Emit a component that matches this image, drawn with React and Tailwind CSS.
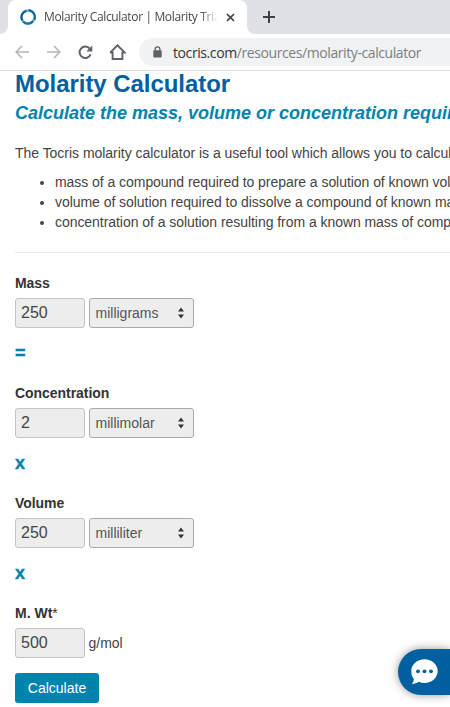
import React from 'react'

const fields = [
  { label: 'Mass', value: '250', unit: 'milligrams', operator: '=' },
  { label: 'Concentration', value: '2', unit: 'millimolar', operator: 'x' },
  { label: 'Volume', value: '250', unit: 'milliliter', operator: 'x' },
]

function Logo() {
  return (
    <svg className="w-4 h-4 shrink-0" viewBox="0 0 16 16" fill="none">
      <circle cx="8" cy="8" r="6.5" stroke="#7db6d8" strokeWidth="2.4" />
      <path d="M8.5 1.3A6.7 6.7 0 0 1 14.2 11" stroke="#0b62a0" strokeWidth="1.9" />
      <path d="M13.200 12A6.600 6.600 0 0 1 3 12.400" stroke="#1673ae" strokeWidth="2.300" />
      <path d="M2.3 11.5A6.7 6.7 0 0 1 6.5 1.8" stroke="#0b62a0" strokeWidth="2.2" />
    </svg>
  )
}

function TabStrip() {
  return (
    <div className="flex h-[34px] bg-white">
      <div className="w-2 bg-[#dee1e6] rounded-br-lg" />
      <div className="w-[239px] bg-[#dee1e6]">
        <div className="flex items-center h-full pl-3 pr-[12px] bg-white rounded-t-lg">
          <Logo />
          <span className="ml-2 w-[174px] overflow-hidden whitespace-nowrap text-[12px] tracking-[-0.36px] text-[#45494d] [mask-image:linear-gradient(to_right,black_90%,transparent)]">
            Molarity Calculator | Molarity Triangle
          </span>
          <svg className="ml-auto w-[9px] h-[9px] shrink-0" viewBox="0 0 9 9" stroke="#3c4043" strokeWidth="1.7">
            <path d="M1 1l7 7M8 1l-7 7" />
          </svg>
        </div>
      </div>
      <div className="flex-1 flex items-center pl-4 bg-[#dee1e6] rounded-bl-lg">
        <svg className="w-[12px] h-[12px]" viewBox="0 0 12 12" stroke="#3c4043" strokeWidth="2">
          <path d="M6 0v12M0 6h12" />
        </svg>
      </div>
    </div>
  )
}

function Toolbar() {
  return (
    <div className="flex items-center h-[37px] pl-[15px] bg-white border-b border-[#dcdddf]">
      <svg className="w-[14px] h-[14px] shrink-0" viewBox="0 0 14 14" fill="none" stroke="#b5b7b9" strokeWidth="1.6">
        <path d="M14 7H1.5M7 1L1.2 7L7 13" />
      </svg>
      <svg className="ml-[18px] w-[14px] h-[14px] shrink-0" viewBox="0 0 14 14" fill="none" stroke="#b5b7b9" strokeWidth="1.6">
        <path d="M0 7h12.5M7 1l5.8 6L7 13" />
      </svg>
      <svg className="ml-[17px] w-[15px] h-[15px] shrink-0" viewBox="0 0 15 15" fill="none">
        <path d="M12.6 9.4A5.7 5.7 0 1 1 11.7 3.7" stroke="#5f6368" strokeWidth="2" />
        <path d="M14.3 0.6v6H8.3z" fill="#5f6368" />
      </svg>
      <svg className="ml-[16px] w-[17px] h-[16px] shrink-0" viewBox="0 0 17 16" fill="none" stroke="#5f6368" strokeWidth="1.9">
        <path d="M3.6 7.5V15h9.8V7.5M1.2 8.6L8.5 1.3l7.3 7.3H13" />
        <path d="M1.2 8.6H4" />
      </svg>
      <div className="flex-1 flex items-center h-7 ml-[13px] pl-[14px] bg-[#f0f2f3] rounded-l-full">
        <svg className="w-[9px] h-[12px] shrink-0" viewBox="0 0 9 12">
          <path d="M2.1 5V3.2a2.4 2.4 0 0 1 4.8 0V5" fill="none" stroke="#5f6368" strokeWidth="1.3" />
          <rect x="0.3" y="4.2" width="8.4" height="7.3" rx="0.9" fill="#5f6368" />
        </svg>
        <span className="ml-[11px] whitespace-nowrap text-[14px] tracking-[-0.41px] text-[#7b7f83]">
          <span className="text-[#333639]">tocris.com</span>/resources/molarity-calculator
        </span>
      </div>
    </div>
  )
}

function NumberBox({ value }) {
  return (
    <input
      type="text"
      defaultValue={value}
      className="w-[70px] h-[30px] px-[5px] text-[16px] text-[#444] bg-[#ededed] border border-[#c4c4c4] rounded-[3px] outline-none"
    />
  )
}

function UnitSelect({ unit }) {
  return (
    <button className="flex items-center justify-between w-[105px] h-[30px] pl-[6px] pr-[9px] text-[14px] text-[#555] bg-[#ededed] border border-[#aaa] rounded-[3px]">
      {unit}
      <svg className="w-[6px] h-[12px]" viewBox="0 0 6 12" fill="#333">
        <path d="M3 0.5L6 4.5H0zM3 11.5L0 7.5h6z" />
      </svg>
    </button>
  )
}

function ChatButton() {
  return (
    <button className="absolute right-0 top-[649px] w-[52px] h-[46px] pl-[13px] pb-[2px] flex items-center bg-[#0260a1] rounded-l-full shadow-[0_0_10px_rgba(0,0,0,0.4)]">
      <svg className="w-[27px] h-[25px]" viewBox="0 0 27 25">
        <path
          d="M13.5 0.3C20.9 0.3 26.7 5.5 26.7 12S20.9 24 13.5 24c-2.1 0-4-.4-5.8-1.2C5.6 24.4 3.1 24.9.7 24.8c1.3-1.3 2-2.8 2.2-4.6C1.2 18 .3 15.2.3 12 .3 5.5 6.1.3 13.5.3z"
          fill="#fff"
        />
        <g fill="#0260a1">
          <circle cx="7" cy="12.3" r="1.9" />
          <circle cx="13.5" cy="12.3" r="1.9" />
          <circle cx="20" cy="12.3" r="1.9" />
        </g>
      </svg>
    </button>
  )
}

function App() {
  return (
    <div className="relative h-[707px] w-[450px] overflow-hidden bg-white">
      <header className="font-['Open_Sans',sans-serif]">
        <TabStrip />
        <Toolbar />
      </header>

      <main className="pl-[15px] font-['Liberation_Sans',Arial,sans-serif] text-[14px] leading-5 text-[#444] whitespace-nowrap">
        <h1 className="text-[24px] leading-[26px] tracking-[-0.05px] font-bold text-[#0260a1]">Molarity Calculator</h1>
        <h2 className="mt-[6px] text-[18px] leading-5 font-bold italic text-[#0084ad]">
          Calculate the mass, volume or concentration required
        </h2>
        <p className="mt-5 tracking-[-0.03px]">
          The Tocris molarity calculator is a useful tool which allows you to calculate the:
        </p>
        <ul className="mt-[9px] pl-10 list-disc tracking-[-0.05px]">
          <li>mass of a compound required to prepare a solution of known volume</li>
          <li>volume of solution required to dissolve a compound of known mass</li>
          <li>concentration of a solution resulting from a known mass of compound</li>
        </ul>
        <hr className="mt-5 mb-5 border-[#e8e8e8]" />

        {fields.map((field) => (
          <div key={field.label} className="h-[110px]">
            <label className="block font-bold tracking-[-0.05px] text-[#333]">{field.label}</label>
            <div className="flex gap-[3.5px] mt-[5px]">
              <NumberBox value={field.value} />
              <UnitSelect unit={field.unit} />
            </div>
            <div className="mt-[15px] text-[18px] font-bold text-[#0084ad] [-webkit-text-stroke:0.4px_#0084ad]">
              {field.operator}
            </div>
          </div>
        ))}

        <label className="block font-bold text-[#333]">
          M. Wt<span className="font-normal">*</span>
        </label>
        <div className="flex items-center gap-[3.5px] mt-[5px]">
          <NumberBox value="500" />
          <span>g/mol</span>
        </div>
        <button className="mt-[15px] w-[84px] h-[30px] text-white bg-[#0084ad] rounded-[3px]">Calculate</button>
      </main>

      <ChatButton />
    </div>
  )
}

export default App
